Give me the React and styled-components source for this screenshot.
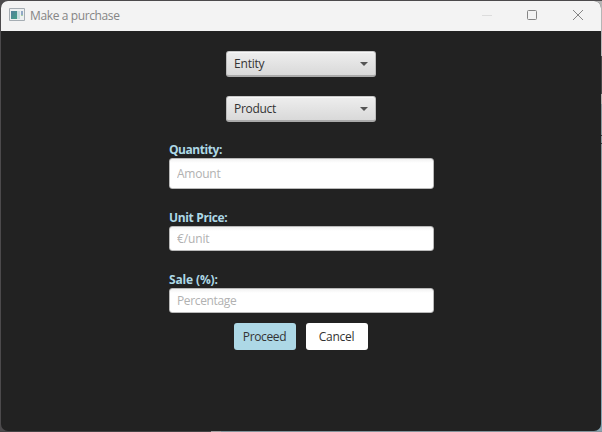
import React from "react";
import styled, { createGlobalStyle } from "styled-components";

const GlobalStyle = createGlobalStyle`
  *, *::before, *::after { box-sizing: border-box; }
  body { margin: 0; font-family: "Open Sans", "Noto Sans", sans-serif; font-size: 12px; }
`;

const Desktop = styled.div`
  width: 602px;
  height: 432px;
  padding: 1px;
  overflow: hidden;
  background:
    linear-gradient(90deg, #454345 211px, #a39d9f 211px, #a39d9f 221px, #83939b 221px) 0 431px / 602px 1px no-repeat,
    linear-gradient(#b5b5b5 55px, #484848 55px, #484848 93px, #b5b3b0 93px, #b5b3b0 103px,
      #8b9a9e 103px, #8b9a9e 134px, #303538 134px, #303538 135px, #8b9a9e 135px,
      #8b9a9e 142px, #303538 142px, #303538 143px, #8b9a9e 143px, #86a5b2) 592px 1px / 10px 430px no-repeat,
    #4c4a4c;
`;

const Window = styled.div`
  width: 600px;
  height: 430px;
  display: flex;
  flex-direction: column;
  overflow: hidden;
  border-radius: 7px;
  background: #222;
`;

const TitleBar = styled.header`
  height: 30px;
  flex: none;
  display: flex;
  align-items: center;
  padding-left: 8px;
  background: #f3f3f3;
  color: #858585;
`;

const AppIcon = styled.svg`
  width: 16px;
  height: 14px;
  margin-right: 5px;
  margin-top: -2px;
`;

const Label = styled.span`
  line-height: 16px;
  white-space: nowrap;
  letter-spacing: ${(p) => p.$track || 0}px;
`;

const WindowControls = styled.div`
  display: flex;
  margin-left: auto;
  height: 100%;
`;

const ControlIcon = styled.svg`
  width: 46px;
  height: 30px;
  fill: none;
  stroke: ${(p) => (p.$disabled ? "#dcdcdc" : "#858585")};
`;

const Form = styled.main`
  display: flex;
  flex-direction: column;
  align-items: center;
  padding-top: 20px;
`;

const ComboBox = styled.button`
  width: 150px;
  height: 26px;
  margin-bottom: 19px;
  padding: 1px 7px 0;
  display: flex;
  align-items: center;
  justify-content: space-between;
  border: 1px solid #bcbcbc;
  border-top-color: #c9c9c9;
  border-bottom: 2px solid #aaa;
  border-radius: 3px;
  background: linear-gradient(#eee, #d9d9d9);
  box-shadow: inset 0 1px #f7f7f7;
  color: #333;
  font: inherit;
`;

const Arrow = styled.svg`
  width: 8px;
  height: 4px;
  fill: #555;
`;

const Field = styled.label`
  width: 265px;
  display: flex;
  flex-direction: column;
  margin-left: 1px;
  margin-bottom: ${(p) => p.$gap}px;
`;

const FieldName = styled(Label)`
  height: 17px;
  padding-top: 1px;
  color: #add8e6;
  font-weight: 700;
`;

const Input = styled.input`
  width: 100%;
  height: ${(p) => p.$height}px;
  padding: 0 7px;
  border: 1px solid #b9b9b9;
  border-radius: 3px;
  background: linear-gradient(#f2f2f2, #fff 4px);
  font: inherit;
  letter-spacing: ${(p) => p.$track || 0}px;
  outline: none;
  &::placeholder { color: #b1b1b1; opacity: 1; }
`;

const Actions = styled.div`
  display: flex;
  gap: 10px;
`;

const Button = styled.button`
  width: 62px;
  height: 27px;
  padding: 0 1px 0 0;
  border: 0;
  border-radius: 3px;
  background: ${(p) => (p.$primary ? "#add8e6" : "#fff")};
  color: #333;
  font: inherit;
`;

function Combo({ text, track }) {
  return (
    <ComboBox>
      <Label $track={track}>{text}</Label>
      <Arrow viewBox="0 0 8 4"><path d="M0 0h8L4 4z" /></Arrow>
    </ComboBox>
  );
}

export default function App() {
  return (
    <Desktop>
      <GlobalStyle />
      <Window>
        <TitleBar>
          <AppIcon viewBox="0 0 16 14">
            <defs>
              <linearGradient id="screen" x1="0" y1="0" x2="1" y2="1">
                <stop offset="0" stopColor="#517f9c" />
                <stop offset="1" stopColor="#43a087" />
              </linearGradient>
            </defs>
            <path d="M.5.5h15v12H.5z" fill="#edf0f1" stroke="#a5adb3" />
            <path d="M2 3h9v8H2z" fill="#c8dcdf" />
            <path d="M2 3h6v8H2z" fill="url(#screen)" />
            <path d="M12 3h2v4h-2z" fill="#91a9c5" />
            <path d="M12 7h2v1h-2z" fill="#a8d0a5" />
          </AppIcon>
          <Label $track={-0.38}>Make a purchase</Label>
          <WindowControls>
            <ControlIcon $disabled viewBox="0 0 46 30"><path d="M19 14.5h10" /></ControlIcon>
            <ControlIcon viewBox="0 0 46 30"><rect x="18.5" y="9.5" width="9" height="9" rx="1" /></ControlIcon>
            <ControlIcon viewBox="0 0 46 30"><path d="M18 9l10 10M28 9L18 19" /></ControlIcon>
          </WindowControls>
        </TitleBar>
        <Form>
          <Combo text="Entity" track={-0.2} />
          <Combo text="Product" track={-0.3} />
          <Field $gap={20}>
            <FieldName $track={-0.45}>Quantity:</FieldName>
            <Input $height={31} $track={-0.25} placeholder="Amount" />
          </Field>
          <Field $gap={20}>
            <FieldName $track={-0.35}>Unit Price:</FieldName>
            <Input $height={25} $track={-0.15} placeholder="€/unit" />
          </Field>
          <Field $gap={10}>
            <FieldName $track={-0.15}>Sale (%):</FieldName>
            <Input $height={25} $track={-0.35} placeholder="Percentage" />
          </Field>
          <Actions>
            <Button $primary><Label $track={-0.35}>Proceed</Label></Button>
            <Button><Label $track={-0.3}>Cancel</Label></Button>
          </Actions>
        </Form>
      </Window>
    </Desktop>
  );
}
